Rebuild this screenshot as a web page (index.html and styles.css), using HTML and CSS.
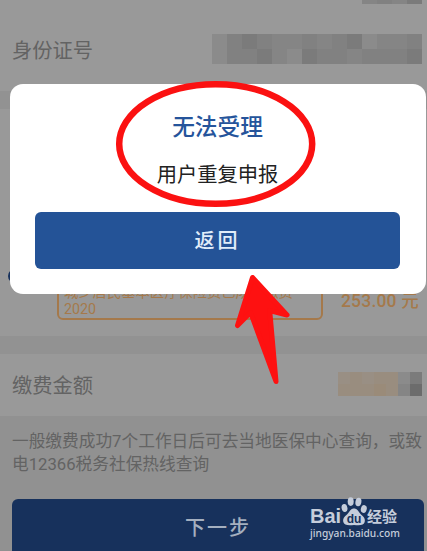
FILE: index.html
```html
<!DOCTYPE html>
<html lang="zh-CN">
<head>
    <meta charset="UTF-8">
    <meta name="viewport" content="width=device-width, initial-scale=1.0">
    <title>社保缴费</title>
    <link rel="stylesheet" href="styles.css">
</head>
<body>
    <div class="page">
        <div class="row name-row">
            <div class="mosaic small"><i class="b"></i><i class="c"></i><i class="b"></i><i class="d"></i></div>
        </div>
        <div class="row id-row">
            <span class="label">身份证号</span>
            <div class="mosaic">
                <i class="a"></i><i class="c"></i><i class="d"></i><i class="c"></i><i class="b"></i><i class="b"></i><i class="c"></i><i class="b"></i><i class="c"></i><i class="d"></i><i class="a"></i><i class="b"></i><i class="b"></i><i class="c"></i>
                <i class="a"></i><i class="c"></i><i class="c"></i><i class="d"></i><i class="b"></i><i class="a"></i><i class="d"></i><i class="c"></i><i class="c"></i><i class="b"></i><i class="c"></i><i class="c"></i><i class="c"></i><i class="d"></i>
            </div>
        </div>
        <div class="band"></div>
        <div class="records">
            <span class="radio"></span>
            <div class="record">城乡居民基本医疗保险费已成功缴费<br>2020</div>
            <span class="price">253.00 元</span>
        </div>
        <div class="band"></div>
        <div class="row amount-row">
            <span class="label">缴费金额</span>
            <div class="mosaic amount">
                <i class="o1"></i><i class="o2"></i><i class="o1"></i><i class="o2"></i><i class="o2"></i><i class="a"></i><i class="d"></i>
                <i class="o2"></i><i class="o2"></i><i class="o2"></i><i class="o3"></i><i class="o2"></i><i class="b"></i><i class="e"></i>
            </div>
        </div>
        <div class="footer">
            <p class="tip">一般缴费成功7个工作日后可去当地医保中心查询，或致<br>电12366税务社保热线查询</p>
            <button class="next">下一步</button>
        </div>
    </div>

    <div class="modal">
        <h1>无法受理</h1>
        <p>用户重复申报</p>
        <button class="back">返回</button>
    </div>

    <svg class="marks" width="427" height="551" viewBox="0 0 427 551">
        <ellipse cx="215.7" cy="144" rx="96.5" ry="59.8" fill="none" stroke="#fb1111" stroke-width="6.5"/>
        <path d="M252.5 277.5L287 315L269.7 310.5L276 381.5L250.5 312.5L237.5 325.5Z" fill="#fe1111" stroke="#fe1111" stroke-width="5" stroke-linejoin="round"/>
    </svg>

    <div class="watermark">
        <div class="brand">
            <span class="bai">Bai</span>
            <svg class="paw" width="26" height="29" viewBox="0 0 26 29">
                <ellipse cx="3.5" cy="11" rx="2.9" ry="4" transform="rotate(-12 3.5 11)"/>
                <ellipse cx="9.7" cy="4.6" rx="3" ry="4.3"/>
                <ellipse cx="17.4" cy="5" rx="3" ry="4.2" transform="rotate(10 17.4 5)"/>
                <ellipse cx="22.8" cy="12" rx="2.9" ry="4" transform="rotate(15 22.8 12)"/>
                <path d="M13 11.5C16.5 11.5 17.5 15 20 17.5C23 20 24.5 22 23.7 25C22.8 28.5 19 28.5 13 28C7 28.5 3.3 28.5 2.3 25C1.5 22 3 20 6 17.5C8.5 15 9.5 11.5 13 11.5Z"/>
                <text x="13" y="25.5" text-anchor="middle">du</text>
            </svg>
            <span class="jy">经验</span>
        </div>
        <div class="url">jingyan.baidu.com</div>
    </div>
</body>
</html>
```
FILE: styles.css
```css
body {
    position: relative;
    width: 427px;
    height: 551px;
    margin: 0;
    overflow: hidden;
    background-color: #999;
    font-family: Roboto, "Noto Sans CJK SC", sans-serif;
}
.page {
    height: 551px;
    overflow: hidden;
    color: #636363;
}
.row {
    display: flex;
    justify-content: space-between;
    box-sizing: border-box;
    padding: 0 5px 0 12px;
}
.name-row {
    height: 4px;
    justify-content: flex-end;
    overflow: hidden;
}
.id-row {
    height: 87px;
    padding-top: 30px;
}
.label {
    font-size: 20.3px;
    line-height: 34px;
}
.mosaic {
    display: grid;
    grid-template-columns: repeat(14, 15px);
    grid-auto-rows: 15px;
    height: 30px;
}
.mosaic.small {
    grid-template-columns: repeat(4, 15px);
}
.mosaic.amount {
    grid-template-columns: repeat(7, 12px);
    grid-auto-rows: 12px;
    margin-top: 18px;
    height: 24px;
}
.a { background-color: #8b8b8b; }
.b { background-color: #858585; }
.c { background-color: #818181; }
.d { background-color: #7b7b7b; }
.e { background-color: #6c6c6c; }
.o1 { background-color: #998f84; }
.o2 { background-color: #998d7f; }
.o3 { background-color: #9a8b79; }
.band {
    height: 18px;
    background-color: #929292;
}
.records {
    display: flex;
    align-items: flex-end;
    box-sizing: border-box;
    height: 227px;
    padding: 0 8px 16px 8px;
}
.radio {
    width: 14px;
    height: 14px;
    margin-bottom: 37px;
    border-radius: 50%;
    background-color: #17315c;
}
.record {
    box-sizing: border-box;
    width: 266px;
    height: 60px;
    margin-left: 35px;
    padding: 22px 5px 0;
    border: 2px solid #a5794b;
    border-radius: 6px;
    color: #a5794b;
    font-size: 14.3px;
    line-height: 17px;
    white-space: nowrap;
}
.price {
    margin: 0 0 7px 18px;
    color: #a5794b;
    font-size: 17.5px;
    font-weight: 500;
    line-height: 24px;
    letter-spacing: 0.2px;
    white-space: nowrap;
}
.amount-row {
    height: 62px;
}
.amount-row .label {
    line-height: 64px;
}
.footer {
    height: 135px;
    padding: 14px 3px 0 12px;
    background-color: #919191;
}
.tip {
    margin: 0 0 23px;
    font-size: 16.7px;
    line-height: 23px;
    white-space: nowrap;
}
button {
    border: none;
    font-family: inherit;
}
.next {
    display: block;
    width: 412px;
    height: 60px;
    padding: 0 0 6px;
    border-radius: 6px;
    background-color: #17315c;
    color: #a4afbf;
    font-size: 20px;
    font-weight: 500;
    letter-spacing: 2px;
}
.modal {
    position: absolute;
    top: 84px;
    left: 10px;
    box-sizing: border-box;
    width: 416px;
    height: 210px;
    padding: 29px 26px 0 25px;
    border-radius: 13px;
    background-color: #fff;
    text-align: center;
}
.modal h1 {
    margin: 0;
    color: #25549b;
    font-size: 22.7px;
    font-weight: 500;
    line-height: 30px;
}
.modal p {
    margin: 17px 0 22px;
    color: #222;
    font-size: 20.3px;
    line-height: 30px;
}
.back {
    display: block;
    width: 365px;
    height: 57px;
    padding: 0 0 2px;
    border-radius: 6px;
    background-color: #245397;
    color: #e1edfa;
    font-size: 20px;
    font-weight: 500;
    letter-spacing: 3px;
}
.marks {
    position: absolute;
    top: 0;
    left: 0;
}
.watermark {
    position: absolute;
    top: 497px;
    left: 310px;
    width: 90px;
    color: #c5cddb;
}
.brand {
    display: flex;
    align-items: flex-end;
    height: 29px;
}
.bai {
    width: 31px;
    font-family: "Liberation Sans", sans-serif;
    font-size: 20px;
    font-weight: bold;
    line-height: 20px;
}
.paw {
    flex: none;
    fill: #c5cddb;
}
.paw text {
    fill: #17315c;
    font-family: "Liberation Sans", sans-serif;
    font-size: 12px;
    font-weight: bold;
}
.jy {
    font-size: 15px;
    font-weight: bold;
    line-height: 17px;
    white-space: nowrap;
}
.url {
    font-family: "Noto Sans", sans-serif;
    font-size: 10.2px;
    font-weight: 500;
    line-height: 15px;
    white-space: nowrap;
}
```
